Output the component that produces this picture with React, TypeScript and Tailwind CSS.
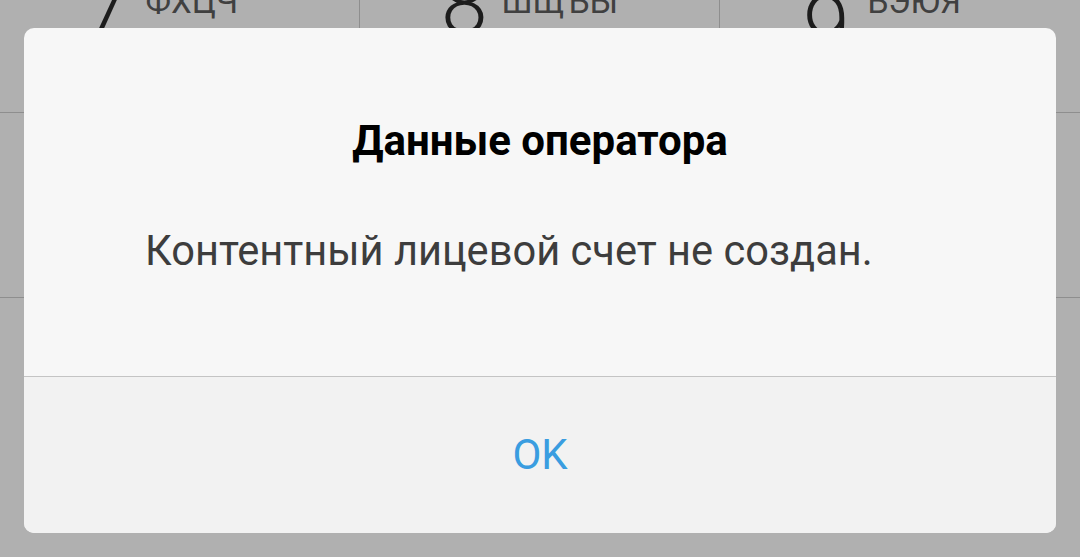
import React from "react";

const keys = [
  { d: "7", l: "ФХЦЧ", dm: "-mt-[37px]", g: "gap-[14px]", p: "pr-[36px]", b: "border-r border-[#8e8e8e]" },
  { d: "8", l: "ШЩЪЫ", dm: "-mt-[37px]", g: "gap-[14px]", p: "pr-[20px]", b: "border-r border-[#8e8e8e]" },
  { d: "9", l: "ЬЭЮЯ", dm: "-mt-[15px]", g: "gap-[18px]", p: "pr-[36px]", b: "" },
];

export default function App() {
  return (
    <div
      className="relative w-[1080px] h-[557px] overflow-hidden bg-[#b0b0b0]"
      style={{ fontFamily: "Roboto, 'Noto Sans', sans-serif" }}
    >
      {/* keypad background */}
      <div className="flex flex-col">
        <div className="grid grid-cols-3 h-[113px] border-b border-[#8e8e8e]">
          {keys.map((k) => (
            <div key={k.d} className={`flex justify-center items-start overflow-hidden ${k.p} ${k.b}`}>
              <div className={`flex items-start ${k.g}`}>
                <span className={`${k.dm} text-[84px] leading-none font-light text-[#1c1c1c]`}>{k.d}</span>
                <span className="-mt-[15px] text-[33px] leading-none text-[#404040]">{k.l}</span>
              </div>
            </div>
          ))}
        </div>
        <div className="grid grid-cols-3 h-[185px] border-b border-[#8e8e8e]">
          <div className="border-r border-[#8e8e8e]" />
          <div className="border-r border-[#8e8e8e]" />
          <div />
        </div>
      </div>

      {/* dialog */}
      <div className="absolute left-[24px] top-[28px] w-[1032px] h-[505px] rounded-[10px] overflow-hidden flex flex-col bg-[#f7f7f7]">
        <div className="h-[348px] flex flex-col">
          <div className="pt-[89px] text-center text-[42px] leading-[48px] font-bold text-black">
            Данные оператора
          </div>
          <div className="pt-[62px] pl-[121px] text-[41.6px] leading-[48px] text-[#3d3d3d]">
            Контентный лицевой счет не создан.
          </div>
        </div>
        <div className="h-px bg-[#c4c4c4]" />
        <div className="flex-1 bg-[#f2f2f2] flex items-center justify-center">
          <span className="text-[42px] leading-none text-[#3a9de0]">OK</span>
        </div>
      </div>
    </div>
  );
}
